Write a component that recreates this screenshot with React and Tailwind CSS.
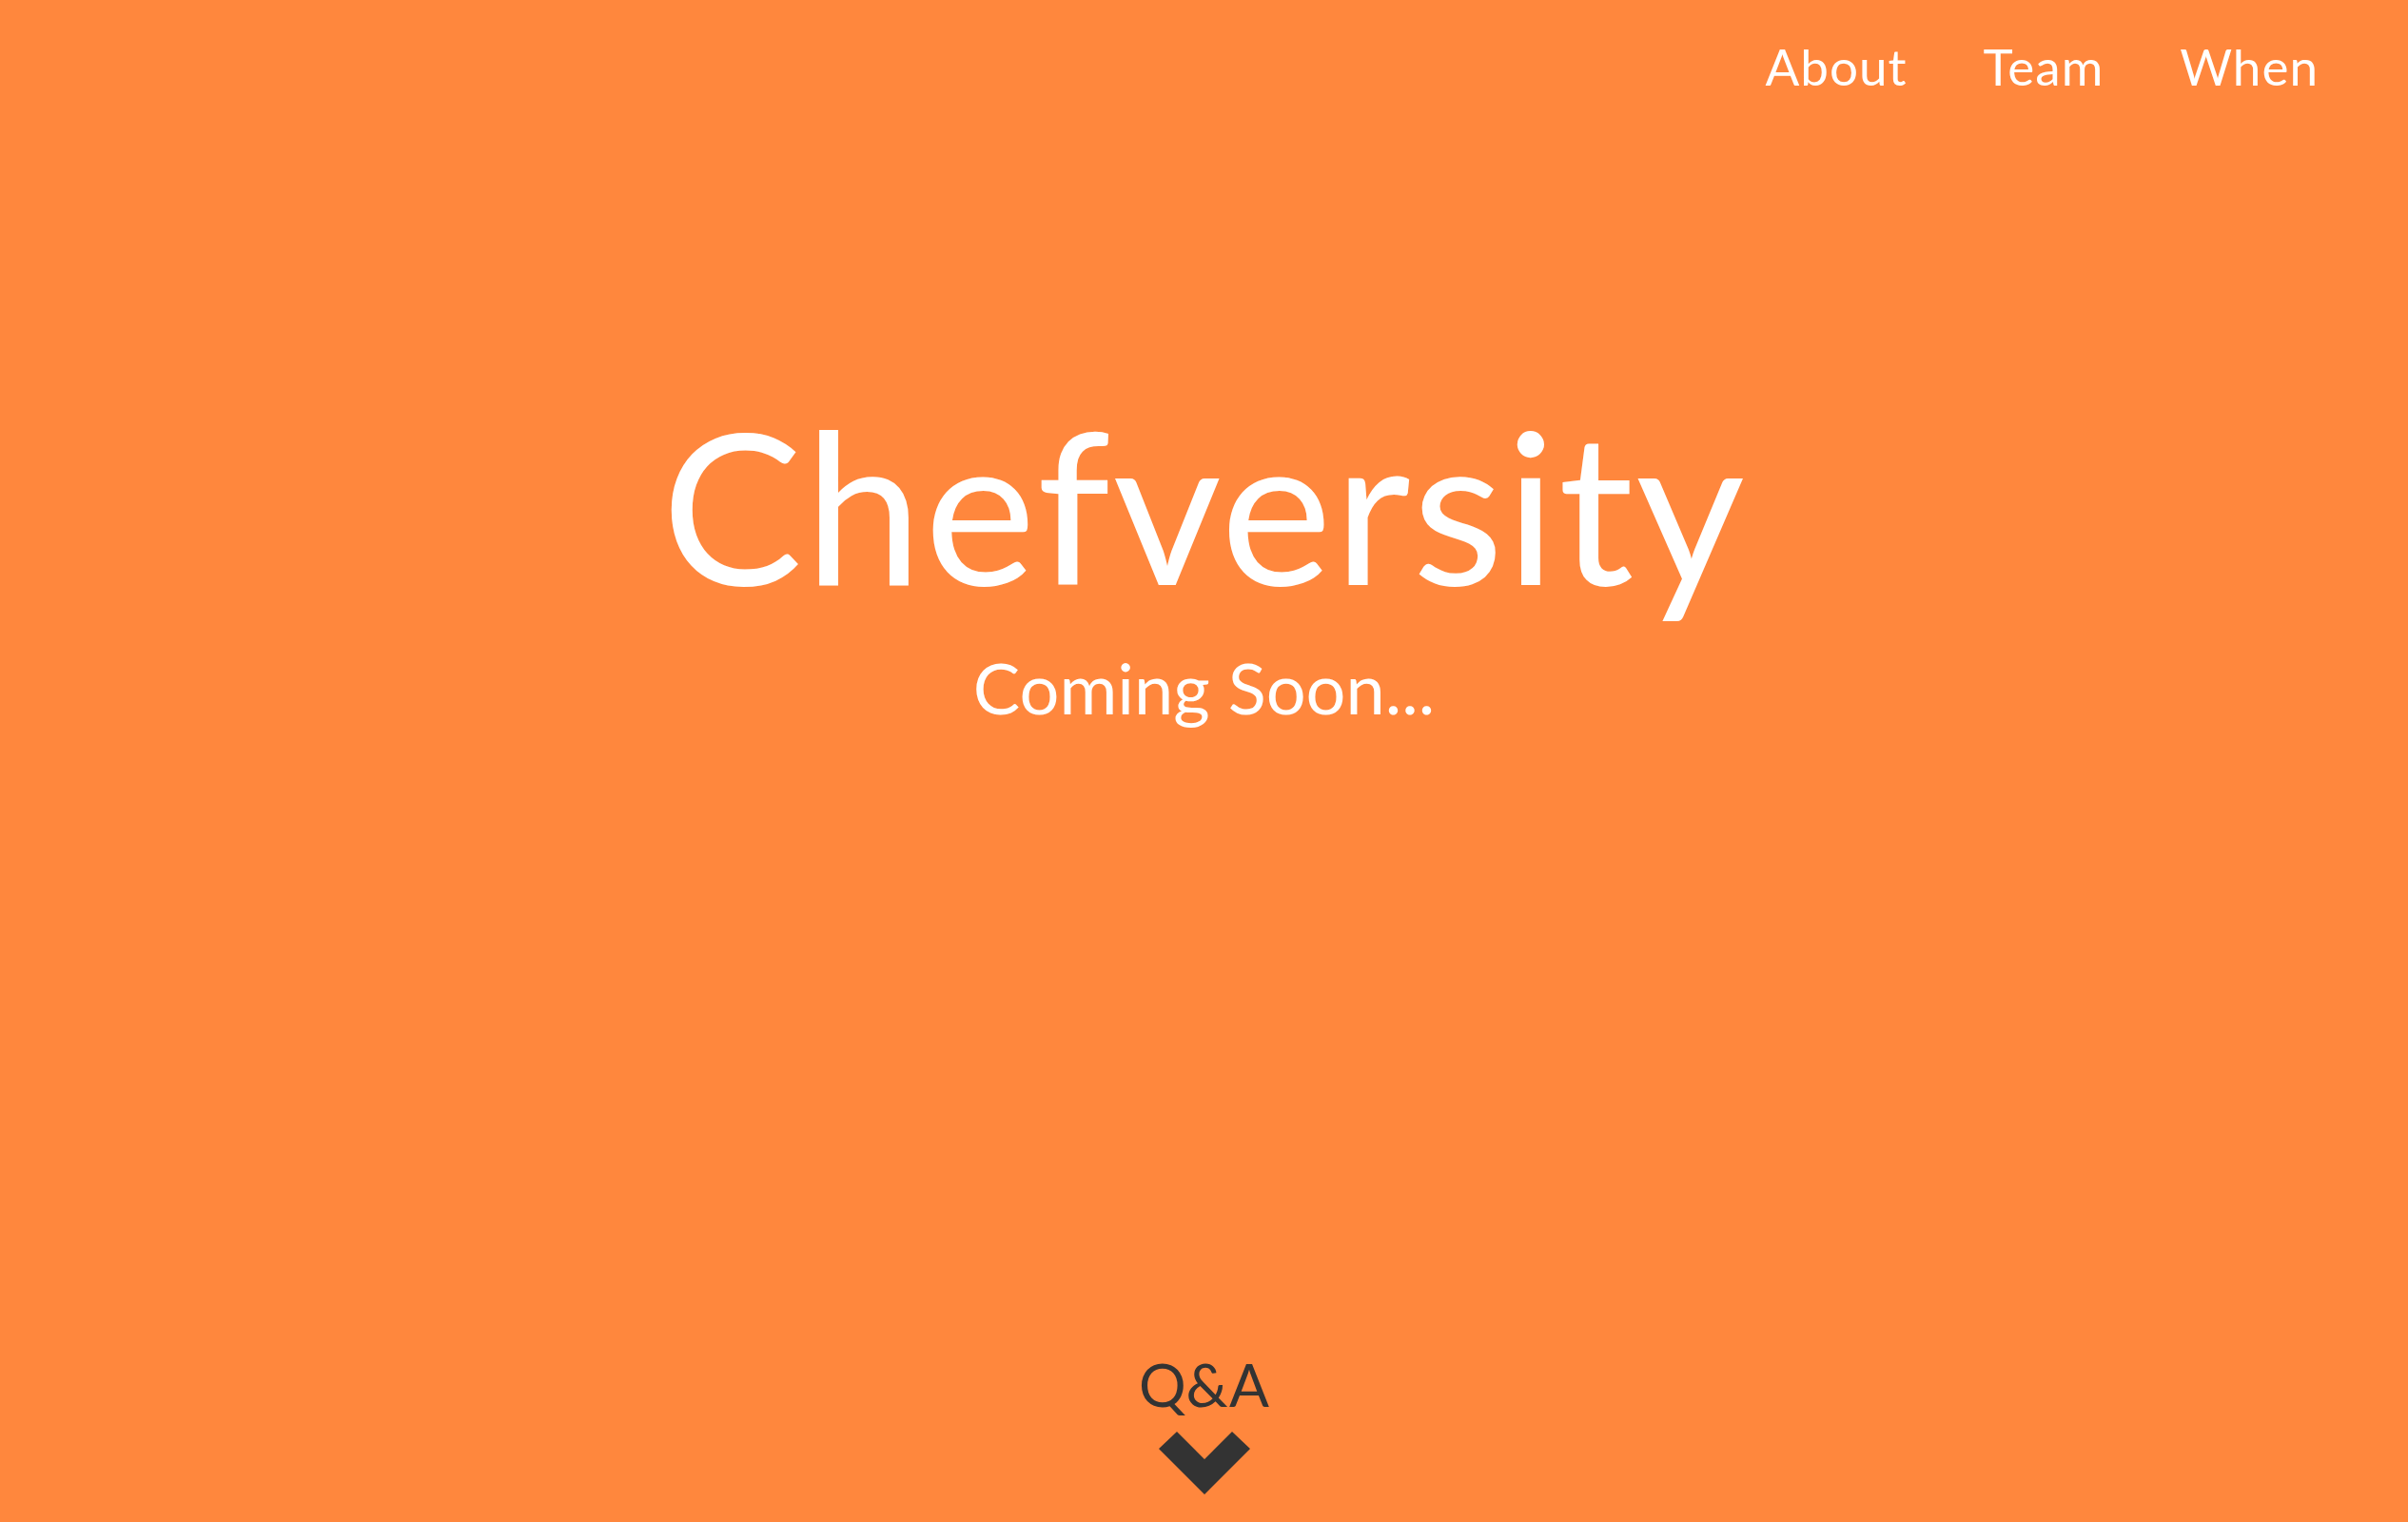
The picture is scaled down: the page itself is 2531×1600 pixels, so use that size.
import React from "react";

const font = { fontFamily: "Lato, 'Open Sans', sans-serif" };

function NavLink({ children }) {
  return (
    <a href="#" className="text-white text-[53px] leading-none tracking-[1px]">
      {children}
    </a>
  );
}

export default function App() {
  return (
    <div
      className="h-screen w-full bg-[#FF873D] flex flex-col items-center overflow-hidden"
      style={font}
    >
      <nav className="w-full flex justify-end gap-[80px] pr-[94px] pt-[43px]">
        <NavLink>About</NavLink>
        <NavLink>Team</NavLink>
        <NavLink>When</NavLink>
      </nav>

      <h1 className="mt-[322px] text-white text-[222px] leading-none font-normal tracking-[2px]">
        Chefversity
      </h1>
      <p className="mt-[46px] text-white text-[74px] leading-none">
        Coming Soon...
      </p>

      <div className="mt-auto pb-[29px] flex flex-col items-center gap-[19px]">
        <span className="text-[#333333] text-[62px] leading-none">Q&amp;A</span>
        <svg width="96" height="66" viewBox="0 0 96 66">
          <polygon
            points="0,18 19,0 48,29 77,0 96,18 48,66"
            fill="#333333"
          />
        </svg>
      </div>
    </div>
  );
}
